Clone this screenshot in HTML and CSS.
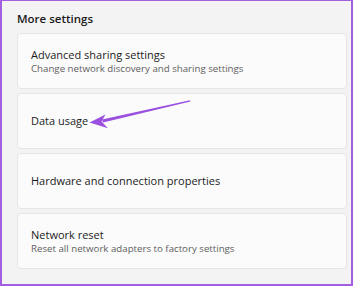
FILE: index.html
```html
<!DOCTYPE html>
<html>
<head>
<meta charset="utf-8">
<link rel="stylesheet" href="styles.css">
</head>
<body>
<div class="frame">
  <h2 class="title">More settings</h2>
  <div class="list">
    <div class="card">
      <div class="name">Advanced sharing settings</div>
      <div class="desc">Change network discovery and sharing settings</div>
    </div>
    <div class="card">
      <div class="name">Data usage</div>
    </div>
    <div class="card">
      <div class="name">Hardware and connection properties</div>
    </div>
    <div class="card">
      <div class="name">Network reset</div>
      <div class="desc">Reset all network adapters to factory settings</div>
    </div>
  </div>
  <svg class="arrow" width="353" height="286" viewBox="0 0 353 286">
    <path d="M190 100.2 L190.4 101.6 L103 122.6 L102 119.6 Z" fill="#9a4fdf"/>
    <path d="M89.5 122.6 L105.5 114.5 L101.5 121.4 L108 128.3 Z" fill="#9a4fdf"/>
  </svg>
</div>
</body>
</html>
```
FILE: styles.css
```css
html, body {
  margin: 0;
  padding: 0;
}
body {
  width: 353px;
  height: 286px;
  overflow: hidden;
  font-family: "Open Sans", "Noto Sans", sans-serif;
  color: #1b1b1b;
}
.frame {
  position: relative;
  box-sizing: border-box;
  width: 353px;
  height: 286px;
  border: 2px solid #a45ee0;
  border-top-width: 1px;
  background: #f3f3f3;
  padding: 10px 4px 0 15px;
}
.title {
  margin: 0 0 6px 0;
  font-size: 11.5px;
  font-weight: 600;
  line-height: 16px;
  height: 16px;
  color: #1a1a1a;
}
.list {
  display: flex;
  flex-direction: column;
  gap: 4px;
}
.card {
  box-sizing: border-box;
  height: 56px;
  background: #fbfbfb;
  border: 1px solid #e6e6e6;
  border-radius: 4px;
  padding: 0 0 0 13px;
  display: flex;
  flex-direction: column;
  justify-content: center;
}
.name {
  font-size: 11px;
  line-height: 14px;
  color: #1b1b1b;
}
.desc {
  font-size: 9.7px;
  line-height: 12px;
  color: #606060;
  margin-top: 1px;
}
.arrow {
  position: absolute;
  left: -2px;
  top: -1px;
}
```
